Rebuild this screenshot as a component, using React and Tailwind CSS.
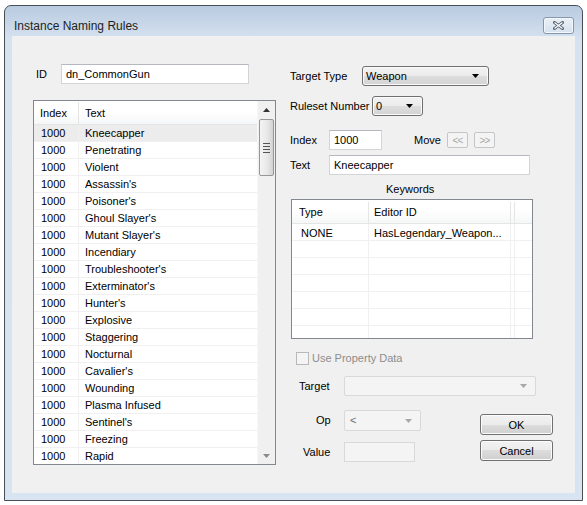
import React from 'react';

const ITEMS = [
  'Kneecapper', 'Penetrating', 'Violent', "Assassin's", "Poisoner's", "Ghoul Slayer's",
  "Mutant Slayer's", 'Incendiary', "Troubleshooter's", "Exterminator's", "Hunter's",
  'Explosive', 'Staggering', 'Nocturnal', "Cavalier's", 'Wounding', 'Plasma Infused',
  "Sentinel's", 'Freezing', 'Rapid',
];

const Arrow = ({ color = '#000' }) => (
  <svg width="7" height="4" viewBox="0 0 7 4">
    <path d="M0 0h7L3.5 4z" fill={color} />
  </svg>
);

const TextBox = ({ value, className = '', disabled }) => (
  <div
    className={`h-[20px] flex items-center px-[4px] pt-[1px] border ${
      disabled ? 'border-[#d9d9d9] bg-[#f4f4f4]' : 'border-[#d2d4d8] border-t-[#b5b8bf] bg-white'
    } ${className}`}
  >
    {value}
  </div>
);

const Combo = ({ value, className = '' }) => (
  <div
    className={`h-[20px] flex items-center justify-between pl-[3px] pr-[9px] border border-[#707070] rounded-[3px] bg-[linear-gradient(#f2f2f2,#ebebeb_50%,#dddddd_50%,#d4d4d4)] shadow-[inset_0_0_0_1px_#fafafa] ${className}`}
  >
    <span className="pt-[1px]">{value}</span>
    <Arrow />
  </div>
);

const DisabledCombo = ({ value, className = '' }) => (
  <div
    className={`flex items-center justify-between pl-[5px] pr-[8px] border border-[#d9d9d9] rounded-[2px] bg-[#f4f4f4] text-[#6d6d6d] ${className}`}
  >
    <span>{value}</span>
    <Arrow color="#a8a8a8" />
  </div>
);

const Button = ({ children }) => (
  <div className="w-[73px] h-[21px] flex items-center justify-center pt-[1px] border border-[#707070] rounded-[3px] bg-[linear-gradient(#f2f2f2,#ebebeb_50%,#dddddd_50%,#cfcfcf)] shadow-[inset_0_0_0_1px_#fcfcfc]">
    {children}
  </div>
);

const MoveButton = ({ children }) => (
  <div className="w-[21px] h-[16px] flex items-center justify-center border border-[#c3c5c8] rounded-[2px] bg-[#f4f4f4] text-[#a6a6a6] text-[10px] tracking-[-1px]">
    {children}
  </div>
);

const ItemList = () => (
  <div className="mt-[16px] w-[243px] h-[365px] border border-[#828790] bg-white flex overflow-hidden">
    <div className="flex-1 flex flex-col overflow-hidden">
      <div className="h-[24px] pt-[1px] flex shrink-0 border-b border-[#e5e5e5] bg-[linear-gradient(#ffffff,#ffffff_45%,#f5f6f7)]">
        <div className="w-[45px] pl-[6px] flex items-center border-r border-[#e5e5e5]">Index</div>
        <div className="flex-1 pl-[6px] flex items-center">Text</div>
      </div>
      {ITEMS.map((name, i) => (
        <div
          key={name}
          className={`h-[17px] shrink-0 flex border-b border-[#f0f0f0] ${i === 0 ? 'bg-[#ececec]' : ''}`}
        >
          <div className="w-[45px] pl-[7px] pt-[1px] flex items-center border-r border-[#f0f0f0]">1000</div>
          <div className="flex-1 pl-[6px] pt-[1px] flex items-center">{name}</div>
        </div>
      ))}
    </div>
    <div className="w-[18px] flex flex-col bg-[#f0f0f0] border-l border-[#f7f7f7]">
      <div className="h-[18px] flex items-center justify-center shrink-0">
        <svg width="7" height="4" viewBox="0 0 7 4">
          <path d="M3.5 0L7 4H0z" fill="#333" />
        </svg>
      </div>
      <div className="mx-[1px] h-[57px] shrink-0 border border-[#979797] rounded-[2px] bg-[linear-gradient(90deg,#f4f4f4,#e8e8e8_55%,#d3d3d3)] flex flex-col items-center justify-center gap-[2px]">
        <div className="w-[7px] h-[1px] bg-[#555]" />
        <div className="w-[7px] h-[1px] bg-[#555]" />
        <div className="w-[7px] h-[1px] bg-[#555]" />
        <div className="w-[7px] h-[1px] bg-[#555]" />
      </div>
      <div className="flex-1" />
      <div className="h-[17px] flex items-center justify-center shrink-0">
        <Arrow color="#8a8a8a" />
      </div>
    </div>
  </div>
);

const KeywordTable = () => (
  <div className="mt-[3px] ml-[1px] w-[242px] h-[140px] border border-[#828790] bg-white flex flex-col overflow-hidden">
    <div className="h-[24px] pt-[2px] shrink-0 flex border-b border-[#e5e5e5] bg-[linear-gradient(#ffffff,#ffffff_45%,#f5f6f7)]">
      <div className="w-[77px] pl-[7px] flex items-center border-r border-[#e5e5e5]">Type</div>
      <div className="w-[142px] pl-[5px] flex items-center border-r border-[#e5e5e5]">Editor ID</div>
      <div className="w-[4px] border-r border-[#e5e5e5]" />
      <div className="flex-1" />
    </div>
    {[0, 1, 2, 3, 4, 5, 6].map((i) => (
      <div key={i} className="h-[17px] shrink-0 flex border-b border-[#f0f0f0]">
        <div className="w-[77px] pl-[9px] pt-[2px] flex items-center border-r border-[#f0f0f0]">{i === 0 ? 'NONE' : ''}</div>
        <div className="w-[142px] pl-[5px] pt-[2px] flex items-center border-r border-[#f0f0f0]">
          {i === 0 ? 'HasLegendary_Weapon...' : ''}
        </div>
        <div className="w-[4px] border-r border-[#f0f0f0]" />
        <div className="flex-1" />
      </div>
    ))}
  </div>
);

export default function App() {
  return (
    <div className="w-[587px] h-[505px] bg-white pt-[5px] pl-[4px] font-['Liberation_Sans',Arial,sans-serif] text-[11px] text-black">
      <div className="w-[579px] h-[496px] border border-[#4a4f55] rounded-t-[7px] bg-[linear-gradient(#b9cbe0,#d6e2f0_34px,#d8e4f2)] flex flex-col">
        <div className="h-[30px] shrink-0 flex items-center justify-between pt-[8px] pl-[9px] pr-[8px]">
          <span className="text-[12px] text-[#1e1e1e] pt-[1px]">Instance Naming Rules</span>
          <div className="w-[31px] h-[17px] border border-[#8697ad] rounded-[3px] bg-[linear-gradient(#eaf0f7,#d6e1ee)] shadow-[inset_0_0_0_1px_#f4f7fb] flex items-center justify-center">
            <svg width="11" height="9" viewBox="0 0 11 9">
              <path d="M1.5 1.5L9.5 7.5M9.5 1.5L1.5 7.5" stroke="#5a6574" strokeWidth="3" strokeLinecap="square" />
              <path d="M1.5 1.5L9.5 7.5M9.5 1.5L1.5 7.5" stroke="#ffffff" strokeWidth="1.2" />
            </svg>
          </div>
        </div>

        <div className="mx-[7px] h-[457px] bg-[#f0f0f0] flex">
          <div className="ml-[21px] w-[243px] pt-[28px] flex flex-col">
            <div className="flex items-center">
              <span className="ml-[3px] w-[25px]">ID</span>
              <TextBox value="dn_CommonGun" className="w-[188px]" />
            </div>
            <ItemList />
          </div>

          <div className="ml-[14px] w-[265px] pt-[30px] flex flex-col">
            <div className="flex items-center">
              <span className="w-[72px]">Target Type</span>
              <Combo value="Weapon" className="w-[127px]" />
            </div>
            <div className="mt-[10px] flex items-center">
              <span className="w-[82px]">Ruleset Number</span>
              <Combo value="0" className="w-[51px]" />
            </div>
            <div className="mt-[14px] flex items-center">
              <span className="w-[39px]">Index</span>
              <TextBox value="1000" className="w-[53px]" />
              <span className="ml-[32px]">Move</span>
              <div className="ml-[6px] flex gap-[6px]">
                <MoveButton>&lt;&lt;</MoveButton>
                <MoveButton>&gt;&gt;</MoveButton>
              </div>
            </div>
            <div className="mt-[5px] flex items-center">
              <span className="w-[39px]">Text</span>
              <TextBox value="Kneecapper" className="w-[201px]" />
            </div>
            <div className="mt-[7px] ml-[96px] h-[14px] flex items-center">Keywords</div>
            <KeywordTable />

            <div className="mt-[13px] ml-[6px] h-[13px] flex items-center text-[#8d8d8d]">
              <div className="w-[13px] h-[13px] border border-[#b8b8b8] bg-[#f4f4f4]" />
              <span className="ml-[3px]">Use Property Data</span>
            </div>
            <div className="mt-[11px] flex items-center">
              <span className="ml-[9px] w-[45px]">Target</span>
              <DisabledCombo value="" className="w-[192px] h-[20px]" />
            </div>
            <div className="flex">
              <div className="w-[131px] flex flex-col">
                <div className="mt-[14px] flex items-center">
                  <span className="ml-[26px] w-[28px]">Op</span>
                  <DisabledCombo value="<" className="w-[77px] h-[21px]" />
                </div>
                <div className="mt-[11px] flex items-center">
                  <span className="ml-[13px] w-[41px]">Value</span>
                  <TextBox value="" disabled className="w-[71px]" />
                </div>
              </div>
              <div className="ml-[59px] flex flex-col">
                <div className="mt-[18px]">
                  <Button>OK</Button>
                </div>
                <div className="mt-[5px]">
                  <Button>Cancel</Button>
                </div>
              </div>
            </div>
          </div>
        </div>
      </div>
    </div>
  );
}
